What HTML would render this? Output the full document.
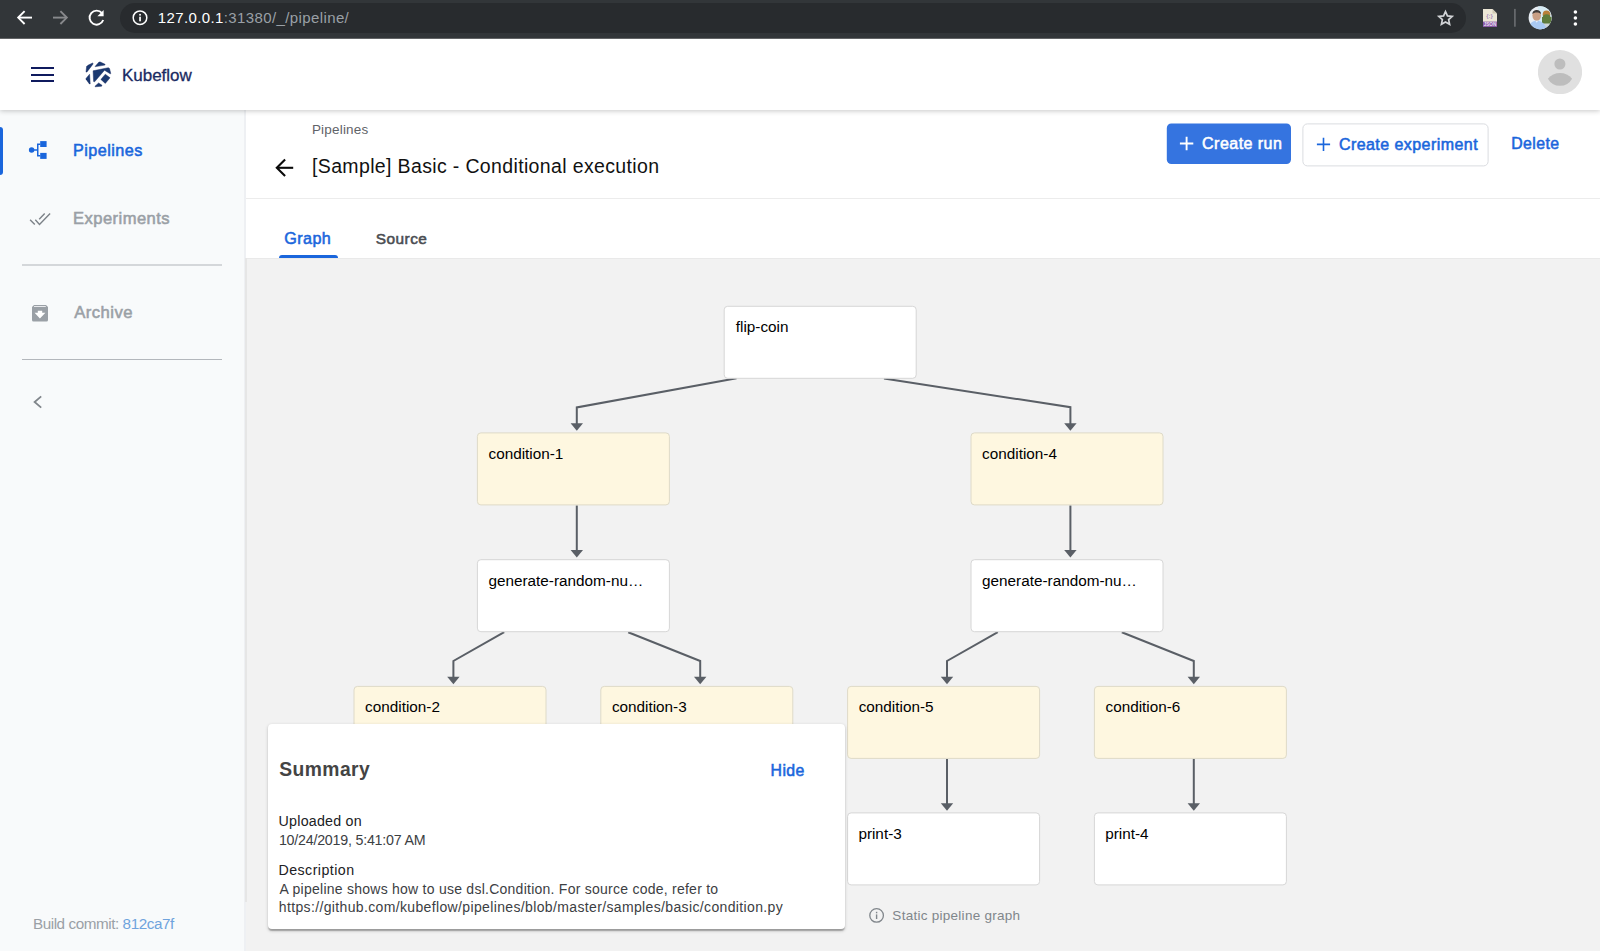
<!DOCTYPE html>
<html lang="en">
<head>
<meta charset="utf-8">
<title>Kubeflow Pipelines</title>
<style>
html,body{margin:0;padding:0;}
body{width:1600px;height:951px;position:relative;overflow:hidden;background:#fff;font-family:"Liberation Sans",sans-serif;}
.abs{position:absolute;}
.t{position:absolute;white-space:nowrap;margin:0;padding:0;}
#chrome{left:0;top:0;width:1600px;height:38px;background:#323639;border-bottom:1px solid #626466;}
#pill{left:120px;top:3px;width:1345.5px;height:30px;border-radius:15px;background:#282b2e;}
#hdr{left:0;top:38px;width:1600px;height:72px;background:#fff;box-shadow:0 1px 5px rgba(0,0,0,.22);z-index:5;}
#side{left:0;top:110px;width:244px;height:841px;background:#f8fafb;border-right:2px solid #eef0f3;}
#titlebar{left:246px;top:110px;width:1354px;height:88px;background:#fff;border-bottom:1px solid #ececec;}
#tabs{left:246px;top:199px;width:1354px;height:59px;background:#fff;}
#graph{left:246px;top:258px;width:1354px;height:692px;background:#f2f2f2;border-top:1px solid #e9e9e9;}
#gl{left:245px;top:258px;width:2px;height:644px;background:#e6e6e6;}
.n{position:absolute;width:190.5px;height:70.5px;border:1px solid #dcdcdc;border-radius:3.5px;background:#fff;}
.n.c{background:#fef7e0;border-color:#e2dfd2;}
#card{left:268px;top:724px;width:577px;height:204.5px;background:#fff;border-radius:4px;box-shadow:0 1.1px 3.4px 0 rgba(0,0,0,.2),0 1.1px 1.1px 0 rgba(0,0,0,.13),0 2.2px 1.1px -1.1px rgba(0,0,0,.11);}
#btn1{left:1167px;top:123.5px;width:124px;height:40.5px;border-radius:4px;background:#3574e0;}
#btn2{left:1302.3px;top:123.3px;width:184.3px;height:41.2px;border-radius:4.5px;background:#fff;border:1px solid #dadce0;}
.hr{position:absolute;left:22px;width:200px;}
</style>
</head>
<body>
<!-- page background areas -->
<div id="side" class="abs"></div>
<div id="titlebar" class="abs"></div>
<div id="tabs" class="abs"></div>
<div id="graph" class="abs"></div>
<div id="gl" class="abs"></div>

<!-- graph -->
<svg class="abs" style="left:0;top:0" width="1600" height="951"><path d="M736.6 378.3 L576.8 407.4 L576.8 424.4" fill="none" stroke="#5a5f66" stroke-width="2" stroke-linejoin="miter"/><path d="M576.8 430.8 l-6.2 -7.6 h12.4z" fill="#5a5f66"/><path d="M884.0 378.6 L1070.4 407.2 L1070.4 424.4" fill="none" stroke="#5a5f66" stroke-width="2" stroke-linejoin="miter"/><path d="M1070.4 430.8 l-6.2 -7.6 h12.4z" fill="#5a5f66"/><path d="M576.8 505.4 L576.8 551.2" fill="none" stroke="#5a5f66" stroke-width="2" stroke-linejoin="miter"/><path d="M576.8 557.6 l-6.2 -7.6 h12.4z" fill="#5a5f66"/><path d="M1070.4 505.4 L1070.4 551.2" fill="none" stroke="#5a5f66" stroke-width="2" stroke-linejoin="miter"/><path d="M1070.4 557.6 l-6.2 -7.6 h12.4z" fill="#5a5f66"/><path d="M504.2 632.2 L453.4 661.0 L453.4 677.9" fill="none" stroke="#5a5f66" stroke-width="2" stroke-linejoin="miter"/><path d="M453.4 684.3 l-6.2 -7.6 h12.4z" fill="#5a5f66"/><path d="M628.2 632.2 L700.2 661.0 L700.2 677.9" fill="none" stroke="#5a5f66" stroke-width="2" stroke-linejoin="miter"/><path d="M700.2 684.3 l-6.2 -7.6 h12.4z" fill="#5a5f66"/><path d="M997.8 632.2 L947.0 661.0 L947.0 677.9" fill="none" stroke="#5a5f66" stroke-width="2" stroke-linejoin="miter"/><path d="M947.0 684.3 l-6.2 -7.6 h12.4z" fill="#5a5f66"/><path d="M1121.8 632.2 L1193.8 661.0 L1193.8 677.9" fill="none" stroke="#5a5f66" stroke-width="2" stroke-linejoin="miter"/><path d="M1193.8 684.3 l-6.2 -7.6 h12.4z" fill="#5a5f66"/><path d="M947.0 758.9 L947.0 804.4" fill="none" stroke="#5a5f66" stroke-width="2" stroke-linejoin="miter"/><path d="M947.0 810.8 l-6.2 -7.6 h12.4z" fill="#5a5f66"/><path d="M1193.8 758.9 L1193.8 804.4" fill="none" stroke="#5a5f66" stroke-width="2" stroke-linejoin="miter"/><path d="M1193.8 810.8 l-6.2 -7.6 h12.4z" fill="#5a5f66"/><rect x="724.20" y="306.30" width="192.00" height="72.00" rx="3.5" fill="#ffffff" stroke="#d6d6d6" stroke-width="1"/><rect x="477.40" y="432.90" width="192.00" height="72.00" rx="3.5" fill="#fef7e0" stroke="#dedac8" stroke-width="1"/><rect x="971.00" y="432.90" width="192.00" height="72.00" rx="3.5" fill="#fef7e0" stroke="#dedac8" stroke-width="1"/><rect x="477.40" y="559.70" width="192.00" height="72.00" rx="3.5" fill="#ffffff" stroke="#d6d6d6" stroke-width="1"/><rect x="971.00" y="559.70" width="192.00" height="72.00" rx="3.5" fill="#ffffff" stroke="#d6d6d6" stroke-width="1"/><rect x="354.00" y="686.40" width="192.00" height="72.00" rx="3.5" fill="#fef7e0" stroke="#dedac8" stroke-width="1"/><rect x="600.80" y="686.40" width="192.00" height="72.00" rx="3.5" fill="#fef7e0" stroke="#dedac8" stroke-width="1"/><rect x="847.60" y="686.40" width="192.00" height="72.00" rx="3.5" fill="#fef7e0" stroke="#dedac8" stroke-width="1"/><rect x="1094.40" y="686.40" width="192.00" height="72.00" rx="3.5" fill="#fef7e0" stroke="#dedac8" stroke-width="1"/><rect x="847.60" y="812.90" width="192.00" height="72.00" rx="3.5" fill="#ffffff" stroke="#d6d6d6" stroke-width="1"/><rect x="1094.40" y="812.90" width="192.00" height="72.00" rx="3.5" fill="#ffffff" stroke="#d6d6d6" stroke-width="1"/></svg>

<div class="t" style="left:735.75px;top:317.00px;font-size:15.30px;line-height:19px;letter-spacing:0.000px;font-weight:400;color:#000">flip-coin</div>
<div class="t" style="left:488.49px;top:444.00px;font-size:15.30px;line-height:19px;letter-spacing:0.000px;font-weight:400;color:#000">condition-1</div>
<div class="t" style="left:982.09px;top:444.00px;font-size:15.30px;line-height:19px;letter-spacing:0.000px;font-weight:400;color:#000">condition-4</div>
<div class="t" style="left:488.49px;top:571.00px;font-size:15.30px;line-height:19px;letter-spacing:0.000px;font-weight:400;color:#000">generate-random-nu…</div>
<div class="t" style="left:982.09px;top:571.00px;font-size:15.30px;line-height:19px;letter-spacing:0.000px;font-weight:400;color:#000">generate-random-nu…</div>
<div class="t" style="left:365.09px;top:697.00px;font-size:15.30px;line-height:19px;letter-spacing:0.000px;font-weight:400;color:#000">condition-2</div>
<div class="t" style="left:611.89px;top:697.00px;font-size:15.30px;line-height:19px;letter-spacing:0.000px;font-weight:400;color:#000">condition-3</div>
<div class="t" style="left:858.69px;top:697.00px;font-size:15.30px;line-height:19px;letter-spacing:0.000px;font-weight:400;color:#000">condition-5</div>
<div class="t" style="left:1105.49px;top:697.00px;font-size:15.30px;line-height:19px;letter-spacing:0.000px;font-weight:400;color:#000">condition-6</div>
<div class="t" style="left:858.38px;top:824.00px;font-size:15.30px;line-height:19px;letter-spacing:0.000px;font-weight:400;color:#000">print-3</div>
<div class="t" style="left:1105.18px;top:824.00px;font-size:15.30px;line-height:19px;letter-spacing:0.000px;font-weight:400;color:#000">print-4</div>

<!-- static graph note -->
<svg class="abs" style="left:868px;top:907px" width="17" height="17" viewBox="0 0 17 17"><circle cx="8.6" cy="8.4" r="6.8" fill="none" stroke="#80868b" stroke-width="1.3"/><rect x="7.9" y="7.4" width="1.4" height="4.6" fill="#80868b"/><rect x="7.9" y="4.8" width="1.4" height="1.5" fill="#80868b"/></svg>

<!-- summary card -->
<div id="card" class="abs"></div>

<!-- sidebar -->
<div class="abs" style="left:0;top:127px;width:3px;height:48px;background:#1a66dc;border-radius:0 3px 3px 0"></div>
<svg class="abs" style="left:26px;top:138px" width="24" height="24" viewBox="0 0 24 24" fill="#1a66dc"><circle cx="5.600" cy="12" r="2.750"/><rect x="14.200" y="3.100" width="6.400" height="5.900"/><rect x="14.200" y="14.900" width="6.400" height="6"/><path d="M5.600 11.250h5.400V5.600h3.300v1.400h-1.800v10h1.800v1.400H11V12.750H5.600z"/></svg>
<svg class="abs" style="left:26px;top:207px" width="28" height="24" viewBox="0 0 28 24" fill="none" stroke="#7c8288" stroke-width="1.400"><path d="M4.100 12.700l4.700 4.800"/><path d="M9.300 12.700l4.200 4.700L24.100 6.600"/><path d="M13.200 12.200l5.500-5.600"/></svg>
<div class="hr" style="top:264px;height:2px;background:#d4d7da"></div>
<svg class="abs" style="left:31px;top:304px" width="18" height="19" viewBox="0 0 18 19"><path d="M3 0.9h12l2 2V16.1a1.5 1.5 0 0 1-1.500 1.500H2.500A1.500 1.500 0 0 1 1 16.100V2.900z" fill="#9aa0a6"/><rect x="3" y="2" width="11.8" height="0.9" fill="#f1f2f4"/><path d="M8.900 14.400L3.600 8.800h3.200V6.700h4.400v2.100h3.200z" fill="#fff"/></svg>
<div class="hr" style="top:359px;height:1px;background:#b3b7bc"></div>
<svg class="abs" style="left:30px;top:392px" width="16" height="20" viewBox="0 0 16 20" fill="none" stroke="#80868b" stroke-width="1.8"><path d="M11.2 4.4L4.6 10l6.6 5.6"/></svg>

<!-- title bar icons & buttons -->
<svg class="abs" style="left:272px;top:155px" width="26" height="26" viewBox="0 0 26 26" fill="none" stroke="#0a0a0a" stroke-width="2.1"><path d="M21.200 12.800H5"/><path d="M13.100 4.500L4.800 12.800l8.300 8.300"/></svg>
<svg class="abs" style="left:1165px;top:121px" width="130" height="46"><rect x="1.800" y="2.500" width="124.200" height="40.500" rx="4.500" fill="#3574e0"/></svg>
<svg class="abs" style="left:1179px;top:136px" width="16" height="16" viewBox="0 0 16 16"><path d="M7.6 0.8v13.4M0.9 7.5h13.4" stroke="#fff" stroke-width="1.9" fill="none"/></svg>
<svg class="abs" style="left:1300px;top:121px" width="192" height="48"><rect x="2.900" y="2.900" width="185.200" height="42" rx="4.500" fill="#fff" stroke="#dadce0" stroke-width="1"/></svg>
<svg class="abs" style="left:1316px;top:137px" width="16" height="16" viewBox="0 0 16 16"><path d="M7.5 0.8v13.2M0.9 7.4h13.2" stroke="#1a66dc" stroke-width="1.6" fill="none"/></svg>
<div class="abs" style="left:279px;top:254.5px;width:58.5px;height:3.5px;background:#1a66dc;border-radius:3.5px 3.5px 0 0"></div>

<!-- app header -->
<div id="hdr" class="abs">
  <div class="abs" style="left:31px;top:29px;width:23px;height:2px;background:#0f1a5e"></div>
  <div class="abs" style="left:31px;top:35.6px;width:23px;height:2px;background:#0f1a5e"></div>
  <div class="abs" style="left:31px;top:42.2px;width:23px;height:2px;background:#0f1a5e"></div>
  <svg class="abs" style="left:78px;top:16px" width="40" height="40" viewBox="0 0 40 40" fill="#1b3970" stroke="#14255f" stroke-width="0.45" stroke-linejoin="round">
    <path d="M14.7 8.9L9.9 11.3 8.6 12.6 8 18.1 9 17.9 15.1 9.9z"/>
    <path d="M17 12.6L21 8H22.3L27.1 10.3 26.9 11.1 17.7 12.6z"/>
    <path d="M15.1 16.8L30.3 13.7 31.5 14.5 32.8 19.6 32.2 19.8 26.5 16.2 16.6 27.8 15.6 27.5z"/>
    <path d="M27.3 20.2L32 23.8 27.3 29.4 22.9 25.4z"/>
    <path d="M11.6 20.2L12.2 29.9H11.4L8 25.2V24.4z"/>
    <path d="M20.6 29L24 31.3 23.6 32.2 17.2 32.8 17 32.2z"/>
  </svg>
  <svg class="abs" style="left:1538px;top:12px" width="44" height="44" viewBox="0 0 44 44"><circle cx="22" cy="22.100" r="22.100" fill="#e0e0e0"/><circle cx="21.900" cy="14" r="5.550" fill="#bdbdbd"/><path d="M9.900 28.700A15.700 15.700 0 0 1 34.100 28.700A13.860 13.860 0 0 1 9.900 28.700z" fill="#bdbdbd"/></svg>
</div>

<!-- browser chrome -->
<div id="chrome" class="abs" style="z-index:6">
  <div id="pill" class="abs"></div>
  <svg class="abs" style="left:14px;top:7px" width="22" height="22" viewBox="0 0 22 22" fill="none" stroke="#fff" stroke-width="1.9"><path d="M18 10.6H4.4"/><path d="M10.6 4.2L4.2 10.6l6.4 6.4"/></svg>
  <svg class="abs" style="left:49px;top:7px" width="22" height="22" viewBox="0 0 22 22" fill="none" stroke="#88898c" stroke-width="1.9"><path d="M4 10.6h13.6"/><path d="M11.4 4.2l6.4 6.4-6.4 6.4"/></svg>
  <svg class="abs" style="left:85px;top:6px" width="24" height="24" viewBox="0 0 24 24"><path d="M17 7.2A7 7 0 1 0 18.2 14" fill="none" stroke="#fff" stroke-width="1.9"/><path d="M18.6 4v6.2h-6.2z" fill="#fff"/></svg>
  <svg class="abs" style="left:131px;top:9px" width="18" height="18" viewBox="0 0 18 18"><circle cx="9" cy="8.7" r="6.8" fill="none" stroke="#fff" stroke-width="1.5"/><rect x="8.2" y="7.7" width="1.7" height="4.6" fill="#fff"/><rect x="8.2" y="4.9" width="1.7" height="1.7" fill="#fff"/></svg>
  <svg class="abs" style="left:1436px;top:8px" width="20" height="20" viewBox="0 0 20 20"><path d="M9.50 3.60L11.44 7.93L16.16 8.44L12.64 11.62L13.61 16.26L9.50 13.90L5.39 16.26L6.36 11.62L2.84 8.44L7.56 7.93z" fill="none" stroke="#d2d4d7" stroke-width="1.7" stroke-linejoin="miter"/></svg>
  <svg class="abs" style="left:1482px;top:8px" width="16" height="20" viewBox="0 0 16 20"><path d="M1 1h9.5L15 5.5V19H1z" fill="#ece7d6"/><path d="M10.5 1L15 5.5h-4.5z" fill="#cfc9b4"/><rect x="1" y="13.6" width="14" height="5.4" fill="#8a5ba6"/><text x="8" y="18" font-family="Liberation Sans, sans-serif" font-size="4.6" font-weight="700" fill="#e9dff0" text-anchor="middle">JSON</text><text x="7.6" y="10.4" font-family="Liberation Sans, sans-serif" font-size="6" font-weight="700" fill="#a98fbd" text-anchor="middle">{:}</text></svg>
  <svg class="abs" style="left:1512px;top:8px" width="6" height="20"><rect x="2.100" y="0.900" width="1.600" height="17.800" fill="#6b6e72"/></svg>
  <svg class="abs" style="left:1528px;top:6px" width="24" height="24" viewBox="0 0 24 24"><defs><clipPath id="av"><circle cx="12.100" cy="11.700" r="11.500"/></clipPath></defs><g clip-path="url(#av)"><rect width="24" height="24" fill="#e9eef4"/><rect x="10" y="0" width="14" height="24" fill="#d6ebf5"/><rect x="14" y="11" width="10" height="8" fill="#5d7a3c"/><ellipse cx="18.500" cy="8.500" rx="3.800" ry="4" fill="#b9803a"/><ellipse cx="18.600" cy="12.500" rx="4" ry="4.200" fill="#5f7c3d"/><rect x="13" y="17.500" width="11" height="6.500" fill="#cfd6d8"/><ellipse cx="8.700" cy="9.600" rx="4.300" ry="5.300" fill="#c99f86"/><path d="M4.300 8.200c0-5.600 8.800-5.600 8.800 0c-1.400-2.400-7.400-2.400-8.800 0z" fill="#3f3a3a"/><path d="M0.500 24c0.300-6.200 3.500-9.300 8.200-9.300s8.700 3.100 10.300 9.300z" fill="#a9c9f2"/><path d="M7.300 14.800l1.400 2 1.400-2z" fill="#e6eefa"/></g></svg>
  <svg class="abs" style="left:1571px;top:8px" width="8" height="20" viewBox="0 0 8 20" fill="#fff"><circle cx="4.4" cy="4" r="1.8"/><circle cx="4.4" cy="10" r="1.8"/><circle cx="4.4" cy="16" r="1.8"/></svg>
</div>

<!-- texts -->
<div style="position:absolute;left:0;top:0;z-index:7">
<div class="t" style="left:157.75px;top:8.00px;font-size:15.00px;line-height:19px;letter-spacing:0.386px;font-weight:400;color:#fff"><span style="color:#ffffff">127.0.0.1</span><span style="color:#9aa0a6">:31380/_/pipeline/</span></div>
<div class="t" style="left:122.04px;top:65.00px;font-size:17.00px;line-height:21px;letter-spacing:-0.030px;font-weight:400;color:#1a2b63;-webkit-text-stroke:0.30px #1a2b63">Kubeflow</div>
<div class="t" style="left:73.11px;top:140.00px;font-size:16.17px;line-height:20px;letter-spacing:0.450px;font-weight:400;color:#1a66dc;-webkit-text-stroke:0.55px #1a66dc">Pipelines</div>
<div class="t" style="left:73.07px;top:208.00px;font-size:16.57px;line-height:21px;letter-spacing:0.450px;font-weight:400;color:#9aa0a6;-webkit-text-stroke:0.55px #9aa0a6">Experiments</div>
<div class="t" style="left:74.20px;top:302.00px;font-size:16.66px;line-height:21px;letter-spacing:0.450px;font-weight:400;color:#9aa0a6;-webkit-text-stroke:0.55px #9aa0a6">Archive</div>
<div class="t" style="left:32.93px;top:914.00px;font-size:15.25px;line-height:19px;letter-spacing:-0.435px;font-weight:400;color:#9aa0a6"><span style="color:#9aa0a6">Build commit: </span><span style="color:#6fa3dd">812ca7f</span></div>
<div class="t" style="left:311.92px;top:121.00px;font-size:13.50px;line-height:17px;letter-spacing:0.200px;font-weight:400;color:#5f6368">Pipelines</div>
<div class="t" style="left:312.03px;top:154.00px;font-size:19.50px;line-height:24px;letter-spacing:0.355px;font-weight:400;color:#111">[Sample] Basic - Conditional execution</div>
<div class="t" style="left:284.19px;top:228.00px;font-size:16.14px;line-height:20px;letter-spacing:0.450px;font-weight:400;color:#1a66dc;-webkit-text-stroke:0.55px #1a66dc">Graph</div>
<div class="t" style="left:375.78px;top:229.00px;font-size:15.43px;line-height:19px;letter-spacing:0.450px;font-weight:400;color:#4a4d52;-webkit-text-stroke:0.55px #4a4d52">Source</div>
<div class="t" style="left:1202.10px;top:133.00px;font-size:16.04px;line-height:20px;letter-spacing:0.450px;font-weight:400;color:#fff;-webkit-text-stroke:0.55px #fff">Create run</div>
<div class="t" style="left:1338.90px;top:135.00px;font-size:15.99px;line-height:19px;letter-spacing:0.450px;font-weight:400;color:#1a66dc;-webkit-text-stroke:0.55px #1a66dc">Create experiment</div>
<div class="t" style="left:1511.13px;top:134.00px;font-size:15.82px;line-height:19px;letter-spacing:0.450px;font-weight:400;color:#1a66dc;-webkit-text-stroke:0.55px #1a66dc">Delete</div>
<div class="t" style="left:279.21px;top:758.00px;font-size:19.29px;line-height:23px;letter-spacing:0.450px;font-weight:700;color:#444">Summary</div>
<div class="t" style="left:770.53px;top:761.00px;font-size:15.82px;line-height:19px;letter-spacing:0.450px;font-weight:400;color:#1a66dc;-webkit-text-stroke:0.55px #1a66dc">Hide</div>
<div class="t" style="left:278.60px;top:812.00px;font-size:14.25px;line-height:18px;letter-spacing:0.228px;font-weight:400;color:#202124">Uploaded on</div>
<div class="t" style="left:278.90px;top:831.00px;font-size:14.25px;line-height:18px;letter-spacing:-0.223px;font-weight:400;color:#3c4043">10/24/2019, 5:41:07 AM</div>
<div class="t" style="left:278.46px;top:861.00px;font-size:14.22px;line-height:18px;letter-spacing:0.450px;font-weight:400;color:#202124">Description</div>
<div class="t" style="left:279.60px;top:880.00px;font-size:14.00px;line-height:18px;letter-spacing:0.250px;font-weight:400;color:#3c4043">A pipeline shows how to use dsl.Condition. For source code, refer to</div>
<div class="t" style="left:278.76px;top:898.00px;font-size:14.00px;line-height:18px;letter-spacing:0.359px;font-weight:400;color:#3c4043">https://github.com/kubeflow/pipelines/blob/master/samples/basic/condition.py</div>
<div class="t" style="left:892.36px;top:907.00px;font-size:13.50px;line-height:17px;letter-spacing:0.268px;font-weight:400;color:#80868b">Static pipeline graph</div>
</div>
</body>
</html>
